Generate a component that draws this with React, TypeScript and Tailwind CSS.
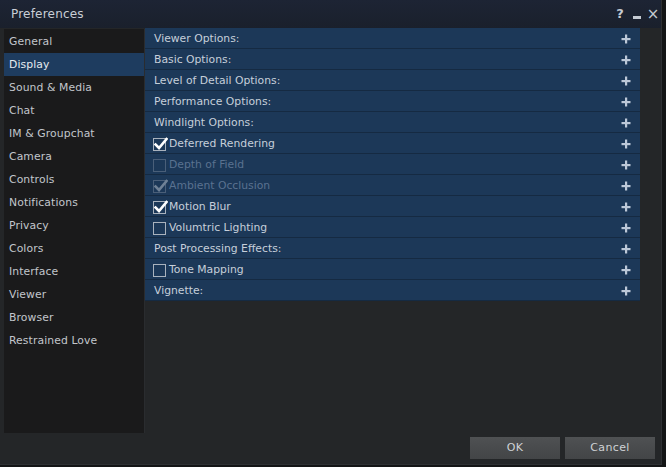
import React from "react";

const sideItems = [
  "General",
  "Display",
  "Sound & Media",
  "Chat",
  "IM & Groupchat",
  "Camera",
  "Controls",
  "Notifications",
  "Privacy",
  "Colors",
  "Interface",
  "Viewer",
  "Browser",
  "Restrained Love",
];

type Row = { label: string; cb?: "on" | "off" | "dis-off" | "dis-on" };

const rows: Row[] = [
  { label: "Viewer Options:" },
  { label: "Basic Options:" },
  { label: "Level of Detail Options:" },
  { label: "Performance Options:" },
  { label: "Windlight Options:" },
  { label: "Deferred Rendering", cb: "on" },
  { label: "Depth of Field", cb: "dis-off" },
  { label: "Ambient Occlusion", cb: "dis-on" },
  { label: "Motion Blur", cb: "on" },
  { label: "Volumtric Lighting", cb: "off" },
  { label: "Post Processing Effects:" },
  { label: "Tone Mapping", cb: "off" },
  { label: "Vignette:" },
];

function Check({ state }: { state: NonNullable<Row["cb"]> }) {
  const disabled = state.startsWith("dis");
  const checked = state === "on" || state === "dis-on";
  return (
    <div
      className={`relative w-[13px] h-[13px] border ${
        disabled ? "border-[#4a5f79]" : "border-[#a9b2bd]"
      } mr-[3px] shrink-0`}
    >
      {checked && (
        <svg
          className="absolute left-[0px] top-[-2px]"
          width="14"
          height="14"
          viewBox="0 0 14 14"
        >
          <path
            d="M1.5 7.5 L5 11 L12.5 2"
            fill="none"
            stroke={disabled ? "#6f8196" : "#ffffff"}
            strokeWidth="2.6"
            strokeLinecap="square"
          />
        </svg>
      )}
    </div>
  );
}

function Plus() {
  return (
    <svg width="10" height="10" viewBox="0 0 10 10">
      <rect x="4" y="0.5" width="2.2" height="9" fill="#bcc8d8" />
      <rect x="0.5" y="4" width="9" height="2.2" fill="#bcc8d8" />
    </svg>
  );
}

export default function App() {
  return (
    <div
      className="w-[666px] h-[467px] bg-[#141516] overflow-hidden"
      style={{ fontFamily: '"DejaVu Sans", "Liberation Sans", sans-serif' }}
    >
      <div className="w-[662px] h-[465px] flex flex-col bg-[#242628] border-r border-b border-[#2e3033]">
        {/* Title bar */}
        <div className="h-[28px] shrink-0 flex items-center justify-between pl-[11px] pr-[1px] bg-gradient-to-b from-[#1d2434] to-[#1a202c]">
          <span className="text-[12px] text-[#c9ced6] tracking-[0.2px]">Preferences</span>
          <div className="flex items-center text-[#c4cad2]">
            <span className="text-[13px] font-bold w-[16px] text-center">?</span>
            <span className="w-[8px] h-[3px] bg-[#c4cad2] mx-[5px] mt-[6px]" />
            <span className="text-[15px] w-[14px] text-center leading-none">×</span>
          </div>
        </div>

        {/* Body */}
        <div className="flex h-[405px] shrink-0">
          <div className="ml-[4px] mt-[1px] w-[141px] h-[404px] bg-[#1a1a1b] pt-[1px] border-r border-[#2a2c2f]">
            {sideItems.map((s) => (
              <div
                key={s}
                className={`h-[23px] flex items-center pl-[5px] pt-[2px] text-[10.8px] tracking-[0.1px] ${
                  s === "Display" ? "bg-[#1e3c5f] text-[#e6ebf0]" : "text-[#c2c6cb]"
                }`}
              >
                {s}
              </div>
            ))}
          </div>
          <div className="w-[495px] flex flex-col">
            {rows.map((r) => {
              const dis = r.cb?.startsWith("dis");
              return (
                <div
                  key={r.label}
                  className="h-[21px] flex items-center justify-between bg-[#1c3858] border-b border-[#152a42] pr-[9px] pl-[8px] pt-[2px]"
                >
                  <div className="flex items-center">
                    {r.cb && <Check state={r.cb} />}
                    <span
                      className={`text-[10.8px] tracking-[0px] ${
                        dis ? "text-[#5a7290]" : "text-[#c6cfda]"
                      } ${r.cb ? "" : "pl-[1px]"}`}
                    >
                      {r.label}
                    </span>
                  </div>
                  <Plus />
                </div>
              );
            })}
          </div>
        </div>

        {/* Footer */}
        <div className="flex justify-end gap-[5px] pr-[6px] mt-[4px]">
          <button className="w-[90px] h-[22px] bg-gradient-to-b from-[#4f5153] to-[#434547] text-[11px] text-[#cfd2d5] tracking-[0.4px]">
            OK
          </button>
          <button className="w-[90px] h-[22px] bg-gradient-to-b from-[#4f5153] to-[#434547] text-[11px] text-[#cfd2d5] tracking-[0.4px]">
            Cancel
          </button>
        </div>
      </div>
    </div>
  );
}
